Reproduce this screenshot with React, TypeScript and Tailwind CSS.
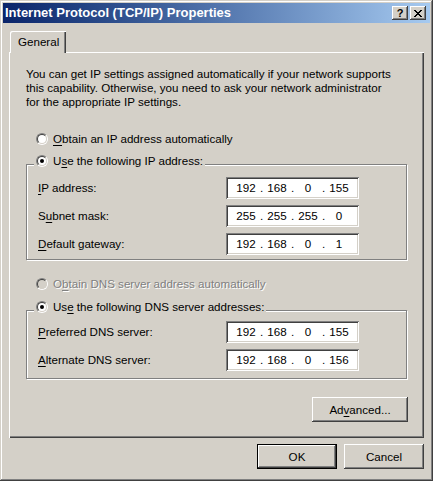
import React from "react";

const raised =
  "shadow-[inset_-1px_-1px_0_#404040,inset_1px_1px_0_#ffffff,inset_-2px_-2px_0_#808080,inset_2px_2px_0_#d4d0c8]";
const sunken =
  "shadow-[inset_1px_1px_0_#808080,inset_-1px_-1px_0_#ffffff,inset_2px_2px_0_#404040,inset_-2px_-2px_0_#d4d0c8]";

function Radio({ checked, disabled }: { checked?: boolean; disabled?: boolean }) {
  return (
    <span className="inline-flex w-[12px] h-[12px] rounded-full border border-t-[#808080] border-l-[#808080] border-b-white border-r-white shrink-0">
      <span
        className={`flex items-center justify-center w-full h-full rounded-full border border-t-[#404040] border-l-[#404040] border-b-[#d4d0c8] border-r-[#d4d0c8] ${
          disabled ? "bg-[#d4d0c8]" : "bg-white"
        }`}
      >
        {checked && <span className="w-[4px] h-[4px] rounded-full bg-black" />}
      </span>
    </span>
  );
}

function U({ children }: { children: React.ReactNode }) {
  return <span className="underline underline-offset-[2px] decoration-[1px]">{children}</span>;
}

function IpField({ parts }: { parts: string[] }) {
  return (
    <div className={`flex items-center w-[133px] h-[22px] bg-white pl-[7px] ${sunken}`}>
      {parts.map((p, i) => (
        <React.Fragment key={i}>
          <span className="w-[26px] text-center">{p}</span>
          {i < 3 && <span className="w-[5px] text-center">.</span>}
        </React.Fragment>
      ))}
    </div>
  );
}

function Row({ label, parts }: { label: React.ReactNode; parts: string[] }) {
  return (
    <div className="flex items-center h-[22px]">
      <div className="w-[199px] pl-[11px] whitespace-nowrap">{label}</div>
      <IpField parts={parts} />
    </div>
  );
}

function Group({ legend, children, className }: { legend: React.ReactNode; children: React.ReactNode; className: string }) {
  return (
    <div
      className={`w-[381px] border border-[#808080] shadow-[inset_1px_1px_0_#ffffff,1px_1px_0_#ffffff] flex flex-col ${className}`}
    >
      <div className="-mt-[11px] ml-[7px] h-[14px] flex items-center gap-[5px] bg-[#d4d0c8] w-fit pl-[2px] pr-[2px] whitespace-nowrap">
        <Radio checked />
        <span>{legend}</span>
      </div>
      {children}
    </div>
  );
}

export default function App() {
  return (
    <div className="w-[437px] h-[484px] bg-white font-['Liberation_Sans',Arial,sans-serif] text-[11.6px] leading-[14px] text-black">
      <div
        className={`w-[433px] h-[481px] bg-[#d4d0c8] p-[3px] flex flex-col shadow-[inset_-1px_-1px_0_#404040,inset_1px_1px_0_#d4d0c8,inset_-2px_-2px_0_#808080,inset_2px_2px_0_#ffffff]`}
      >
        {/* Title bar */}
        <div className="h-[20px] flex items-center bg-gradient-to-r from-[#0a246a] to-[#a6caf0] pl-[2px] pr-[4px]">
          <span className="text-white font-bold text-[13px] leading-[16px] whitespace-nowrap">
            Internet Protocol (TCP/IP) Properties
          </span>
          <div className="ml-auto flex gap-[2px]">
            <div className={`w-[16px] h-[14px] bg-[#d4d0c8] flex items-center justify-center ${raised}`}>
              <span className="font-bold text-[11px] leading-[11px] pt-px">?</span>
            </div>
            <div className={`w-[16px] h-[14px] bg-[#d4d0c8] flex items-center justify-center ${raised}`}>
              <svg width="8" height="7" viewBox="0 0 8 7" shapeRendering="crispEdges">
                <path d="M0 0h2v1h-2zM6 0h2v1h-2zM1 1h2v1h-2zM5 1h2v1h-2zM2 2h4v1h-4zM3 3h2v1h-2zM2 4h4v1h-4zM1 5h2v1h-2zM5 5h2v1h-2zM0 6h2v1h-2zM6 6h2v1h-2z" fill="#000" />
              </svg>
            </div>
          </div>
        </div>

        {/* Body */}
        <div className="px-[6px] pt-[8px] flex flex-col">
          {/* Tab */}
          <div
            className={`relative z-10 -mb-px ml-[1px] w-[56px] h-[22px] bg-[#d4d0c8] rounded-tl-[2px] flex items-center pl-[8px] shadow-[inset_1px_1px_0_#ffffff,inset_-1px_0_0_#404040,inset_-2px_0_0_#808080]`}
          >
            General
          </div>

          {/* Panel */}
          <div className="w-[415px] h-[386px] pl-[17px] pt-[15px] flex flex-col shadow-[inset_1px_1px_0_#ffffff,inset_-1px_-1px_0_#404040,inset_-2px_-2px_0_#808080]">
            <p className="whitespace-nowrap">
              You can get IP settings assigned automatically if your network supports
              <br />
              this capability. Otherwise, you need to ask your network administrator
              <br />
              for the appropriate IP settings.
            </p>

            <div className="mt-[23px] h-[14px] flex items-center gap-[5px] ml-[10px] whitespace-nowrap">
              <Radio />
              <span>
                <U>O</U>btain an IP address automatically
              </span>
            </div>

            <Group
              className="mt-[18px] pb-[4px]"
              legend={
                <>
                  U<U>s</U>e the following IP address:
                </>
              }
            >
              <div className="mt-[9px] flex flex-col gap-[6px]">
                <Row
                  label={
                    <>
                      <U>I</U>P address:
                    </>
                  }
                  parts={["192", "168", "0", "155"]}
                />
                <Row
                  label={
                    <>
                      S<U>u</U>bnet mask:
                    </>
                  }
                  parts={["255", "255", "255", "0"]}
                />
                <Row
                  label={
                    <>
                      <U>D</U>efault gateway:
                    </>
                  }
                  parts={["192", "168", "0", "1"]}
                />
              </div>
            </Group>

            <div className="mt-[17px] h-[14px] flex items-center gap-[5px] ml-[10px] whitespace-nowrap">
              <Radio disabled />
              <span className="text-[#808080] [text-shadow:1px_1px_0_#ffffff]">
                O<U>b</U>tain DNS server address automatically
              </span>
            </div>

            <Group
              className="mt-[19px] pb-[7px]"
              legend={
                <>
                  Us<U>e</U> the following DNS server addresses:
                </>
              }
            >
              <div className="mt-[7px] flex flex-col gap-[6px]">
                <Row
                  label={
                    <>
                      <U>P</U>referred DNS server:
                    </>
                  }
                  parts={["192", "168", "0", "155"]}
                />
                <Row
                  label={
                    <>
                      <U>A</U>lternate DNS server:
                    </>
                  }
                  parts={["192", "168", "0", "156"]}
                />
              </div>
            </Group>

            <div className="w-[382px] mt-[18px] flex justify-end">
              <div className={`w-[96px] h-[25px] flex items-center justify-center bg-[#d4d0c8] ${raised}`}>
                Ad<U>v</U>anced...
              </div>
            </div>
          </div>

          {/* Bottom buttons */}
          <div className="mt-[6px] flex justify-end gap-[7px]">
            <div className="w-[80px] h-[25px] border border-black">
              <div className={`w-full h-full flex items-center justify-center bg-[#d4d0c8] ${raised}`}>OK</div>
            </div>
            <div className={`w-[80px] h-[25px] flex items-center justify-center bg-[#d4d0c8] ${raised}`}>Cancel</div>
          </div>
        </div>
      </div>
    </div>
  );
}
